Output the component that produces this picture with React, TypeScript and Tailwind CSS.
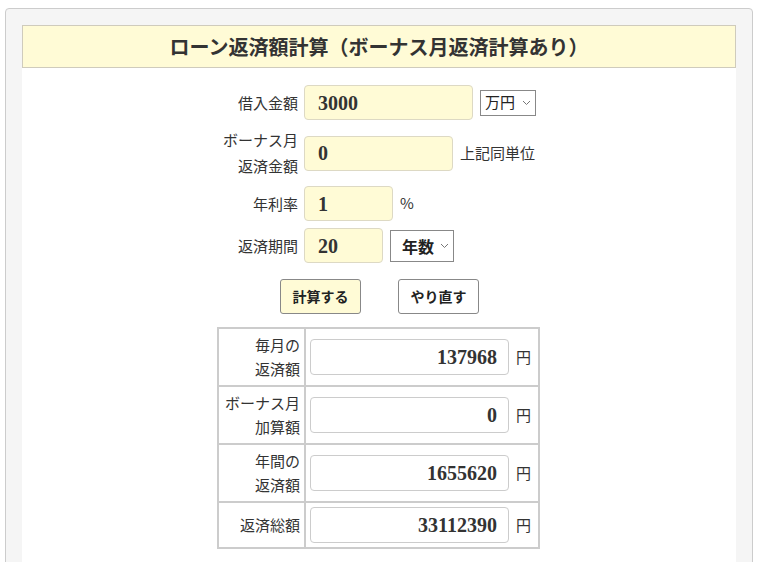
import React from "react";

const jp = { fontFamily: '"Noto Sans CJK JP", "Noto Sans", sans-serif' };
const num = { fontFamily: '"Liberation Serif", "Times New Roman", serif' };

function Chevron() {
  return (
    <svg width="9" height="6" viewBox="0 0 9 6" className="ml-auto">
      <path d="M1 1 L4.5 4.5 L8 1" fill="none" stroke="#777" strokeWidth="1" />
    </svg>
  );
}

function YellowInput({ value, width }: { value: string; width: string }) {
  return (
    <div
      className={`${width} h-[35px] flex items-center pl-[13px] rounded-[4px] border border-[#ddd9c4] bg-[#fffbd6] text-[20px] font-bold text-[#333]`}
      style={num}
    >
      {value}
    </div>
  );
}

function Row({ label, children }: { label: React.ReactNode; children: React.ReactNode }) {
  return (
    <div className="flex items-center">
      <div className="w-[90px] text-right leading-[26px] text-[15px] text-[#333]">{label}</div>
      <div className="ml-[6px] flex items-center">{children}</div>
    </div>
  );
}

function ResultRow({ label, value, last }: { label: React.ReactNode; value: string; last?: boolean }) {
  return (
    <div className={`flex ${last ? "" : "border-b-2 border-[#ccc]"}`}>
      <div className="w-[87px] border-r-2 border-[#ccc] flex items-center justify-end pr-[4px] py-[4px] text-[15px] leading-[24px] text-[#333] text-right">
        {label}
      </div>
      <div className="flex items-center pl-[4px] py-[4px]">
        <div
          className="w-[199px] h-[36px] flex items-center justify-end pr-[11px] rounded-[4px] border border-[#ccc] bg-white text-[20px] font-bold text-[#333]"
          style={num}
        >
          {value}
        </div>
        <span className="ml-[7px] text-[15px] text-[#333]">円</span>
      </div>
    </div>
  );
}

export default function App() {
  return (
    <div className="w-[758px] h-[562px] overflow-hidden bg-white pt-[8px] pl-[5px]" style={jp}>
      <div className="w-[748px] h-[600px] rounded-t-[4px] border border-[#ccc] bg-[#f5f5f5] pt-[16px] pl-[16px]">
        <div className="w-[714px] h-[600px] bg-white">
          <div className="h-[43px] border border-[#cfcbbc] bg-[#fffbd6] flex items-center justify-center text-[20px] font-bold text-[#333]">
            ローン返済額計算（ボーナス月返済計算あり）
          </div>

          <div className="mt-[17px] pl-[186px] flex flex-col gap-[7px]">
            <Row label="借入金額">
              <YellowInput value="3000" width="w-[169px]" />
              <div className="ml-[7px] w-[56px] h-[26px] border border-[#888] bg-white flex items-center px-[4px] text-[15px] text-[#222]">
                万円
                <Chevron />
              </div>
            </Row>
            <Row
              label={
                <>
                  ボーナス月
                  <br />
                  返済金額
                </>
              }
            >
              <YellowInput value="0" width="w-[149px]" />
              <span className="ml-[7px] text-[15px] text-[#333]">上記同単位</span>
            </Row>
            <Row label="年利率">
              <YellowInput value="1" width="w-[89px]" />
              <span className="ml-[7px] text-[15px] text-[#333]">%</span>
            </Row>
            <Row label="返済期間">
              <YellowInput value="20" width="w-[79px]" />
              <div className="ml-[7px] w-[64px] h-[32px] border border-[#888] bg-white flex items-center pl-[11px] pr-[4px] text-[16px] font-bold text-[#222]">
                年数
                <Chevron />
              </div>
            </Row>
          </div>

          <div className="mt-[16px] flex justify-center gap-[37px] pl-[1px]">
            <div className="w-[81px] h-[35px] rounded-[3px] border border-[#888] bg-[#fffbd6] flex items-center justify-center text-[14px] font-bold text-[#222]">
              計算する
            </div>
            <div className="w-[81px] h-[35px] rounded-[3px] border border-[#888] bg-white flex items-center justify-center text-[14px] font-bold text-[#222]">
              やり直す
            </div>
          </div>

          <div className="mt-[13px] ml-[195px] w-[323px] border-2 border-[#ccc]">
            <ResultRow
              label={
                <>
                  毎月の
                  <br />
                  返済額
                </>
              }
              value="137968"
            />
            <ResultRow
              label={
                <>
                  ボーナス月
                  <br />
                  加算額
                </>
              }
              value="0"
            />
            <ResultRow
              label={
                <>
                  年間の
                  <br />
                  返済額
                </>
              }
              value="1655620"
            />
            <ResultRow label="返済総額" value="33112390" last />
          </div>
        </div>
      </div>
    </div>
  );
}
